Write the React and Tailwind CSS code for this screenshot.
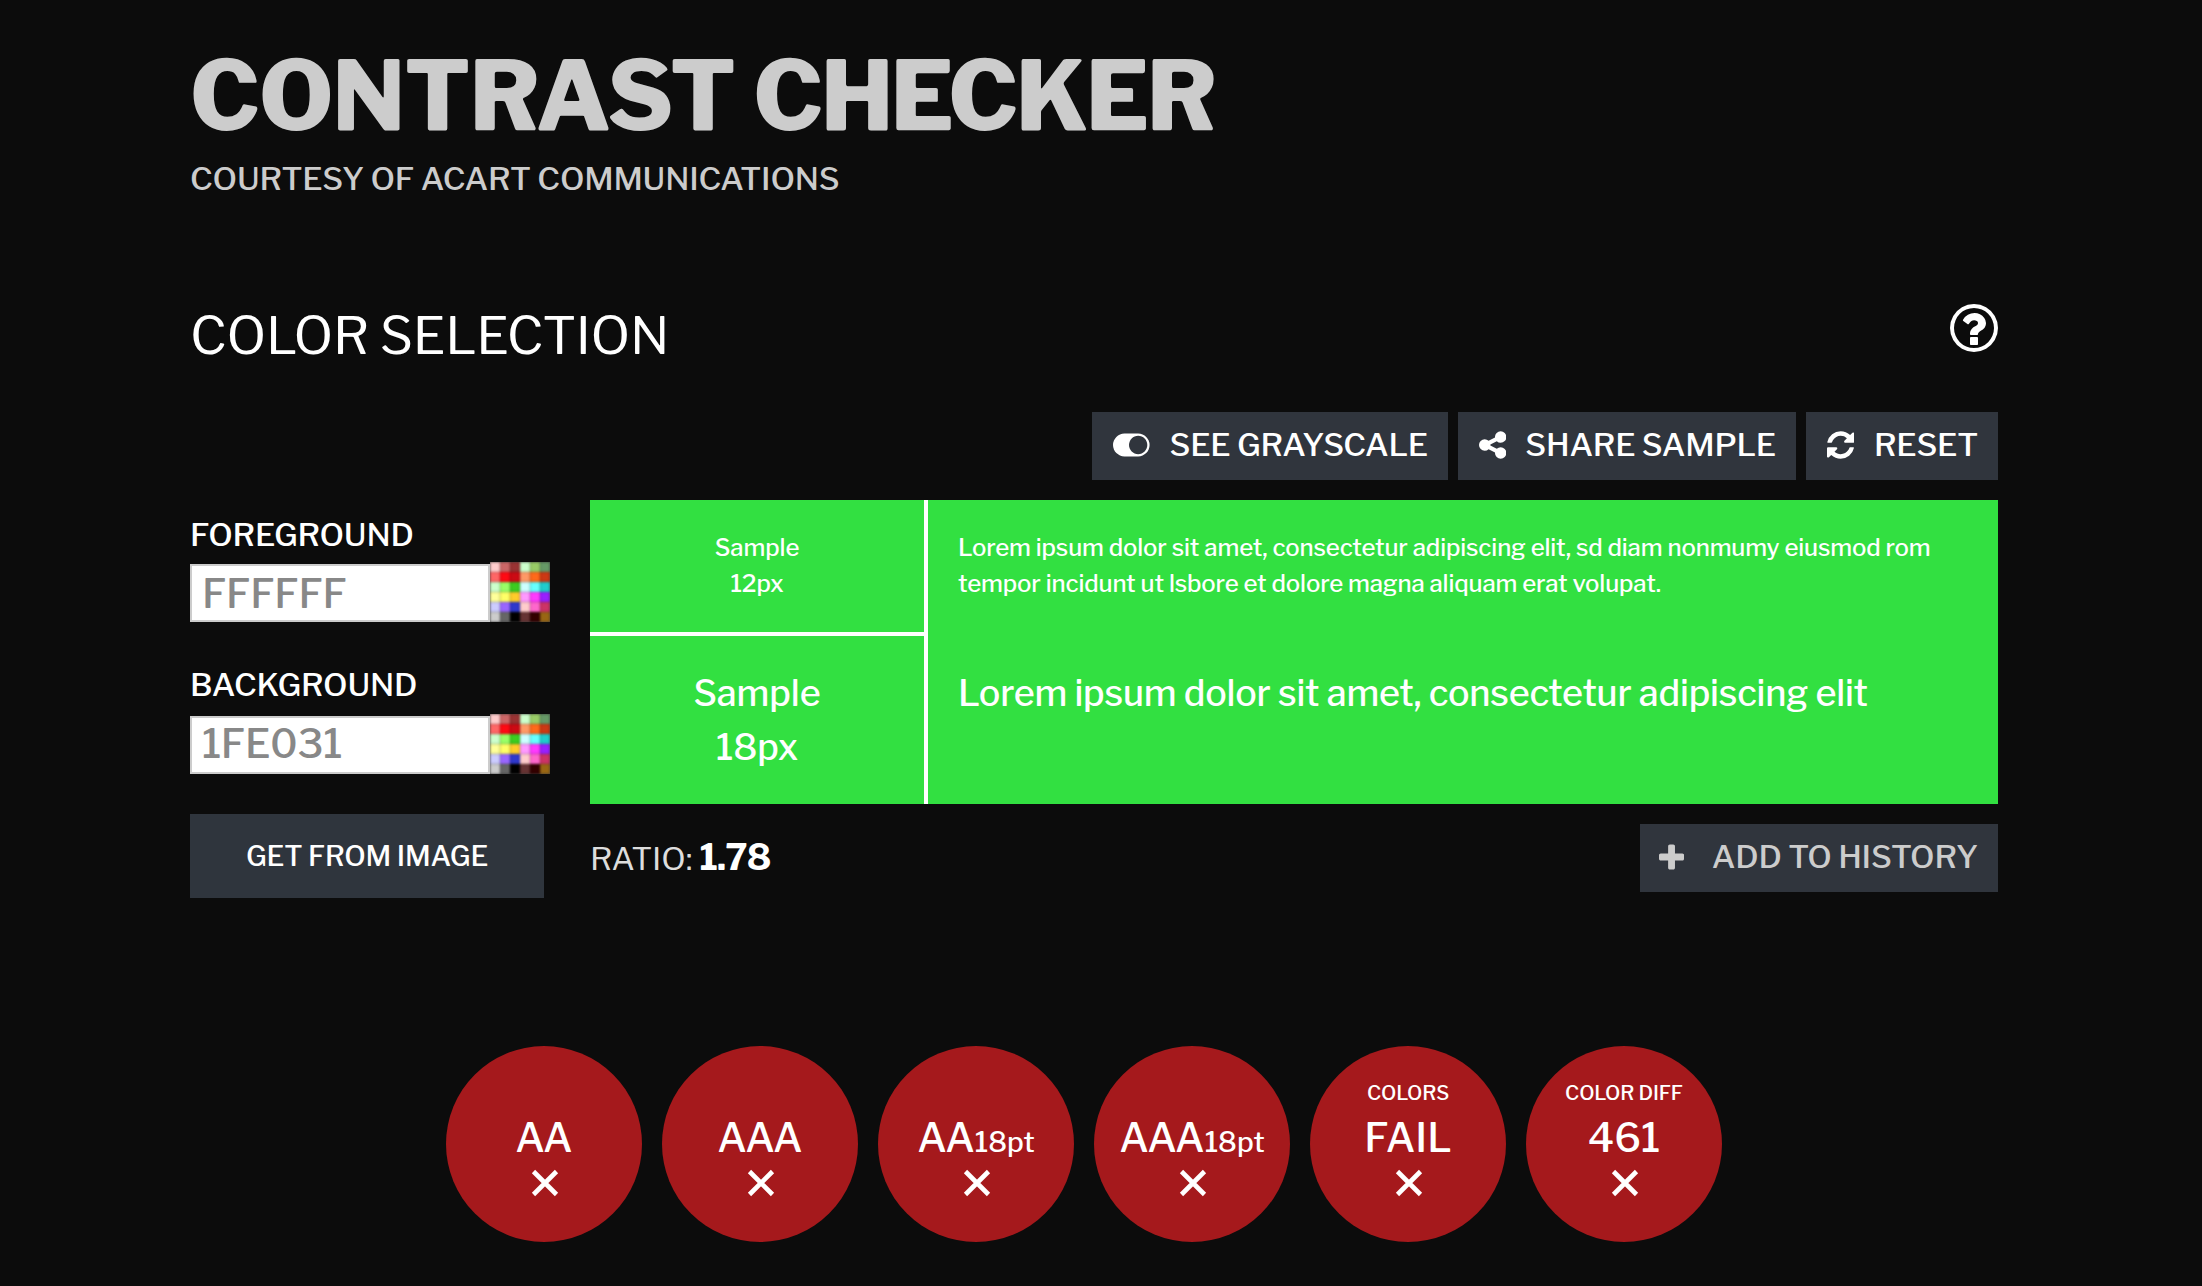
import React from 'react';

const GLYPHS = {
  help: {
    width: 1536,
    d: 'M896 1376v-192q0-14-9-23t-23-9h-192q-14 0-23 9t-9 23v192q0 14 9 23t23 9h192q14 0 23-9t9-23zm256-672q0-88-55.5-163t-138.5-116-170-41q-243 0-371 213-15 24 8 42l132 100q7 6 19 6 16 0 25-12 53-68 86-92 34-24 86-24 48 0 85.5 26t37.5 59q0 38-20 61t-68 45q-63 28-115.5 86.5t-52.5 125.5v36q0 14 9 23t23 9h192q14 0 23-9t9-23q0-19 21.5-49.5t54.5-49.5q32-18 49-28.5t46-35 44.5-48 28-60.5 12.5-81zM768 224q-130 0-248.5 51t-204 136.5-136.5 204-51 248.5 51 248.5 136.5 204 204 136.5 248.5 51 248.5-51 204-136.5 136.5-204 51-248.5-51-248.5-136.5-204-204-136.5-248.5-51zm768 640q0 209-103 385.5t-279.5 279.5-385.5 103-385.5-103-279.5-279.5-103-385.5 103-385.5 279.5-279.5 385.5-103 385.5 103 279.5 279.5 103 385.5z',
  },
  toggle: {
    width: 2048,
    d: 'M0 896q0-130 51-248.5t136.5-204 204-136.5 248.5-51h768q130 0 248.5 51t204 136.5 136.5 204 51 248.5-51 248.5-136.5 204-204 136.5-248.5 51h-768q-130 0-248.5-51t-204-136.5-136.5-204-51-248.5zm1408 512q104 0 198.5-40.5t163.5-109.5 109.5-163.5 40.5-198.5-40.5-198.5-109.5-163.5-163.5-109.5-198.5-40.5-198.5 40.5-163.5 109.5-109.5 163.5-40.5 198.5 40.5 198.5 109.5 163.5 163.5 109.5 198.5 40.5z',
  },
  share: {
    width: 1536,
    d: 'M1216 1024q133 0 226.5 93.5t93.5 226.5-93.5 226.5-226.5 93.5-226.5-93.5-93.5-226.5q0-12 2-34l-360-180q-92 86-218 86-133 0-226.5-93.5t-93.5-226.5 93.5-226.5 226.5-93.5q126 0 218 86l360-180q-2-22-2-34 0-133 93.5-226.5t226.5-93.5 226.5 93.5 93.5 226.5-93.5 226.5-226.5 93.5q-126 0-218-86l-360 180q2 22 2 34t-2 34l360 180q92-86 218-86z',
  },
  refresh: {
    width: 1536,
    d: 'M1511 1056q0 5-1 7-64 268-268 434.5t-478 166.5q-146 0-282.5-55t-243.5-157l-129 129q-19 19-45 19t-45-19-19-45v-448q0-26 19-45t45-19h448q26 0 45 19t19 45-19 45l-137 137q71 66 161 102t187 36q134 0 250-65t186-179q11-17 53-117 8-23 30-23h192q13 0 22.5 9.5t9.5 22.5zm25-800v448q0 26-19 45t-45 19h-448q-26 0-45-19t-19-45 19-45l138-138q-148-137-349-137-134 0-250 65t-186 179q-11 17-53 117-8 23-30 23h-199q-13 0-22.5-9.5t-9.5-22.5v-7q65-268 270-434.5t480-166.5q146 0 284 55.5t245 156.5l130-129q19-19 45-19t45 19 19 45z',
  },
  plus: {
    width: 1408,
    d: 'M1408 800v192q0 40-28 68t-68 28h-416v416q0 40-28 68t-68 28h-192q-40 0-68-28t-28-68v-416h-416q-40 0-68-28t-28-68v-192q0-40 28-68t68-28h416v-416q0-40 28-68t68-28h192q40 0 68 28t28 68v416h416q40 0 68 28t28 68z',
  },
};

function Glyph({ name, className }) {
  const g = GLYPHS[name];
  return (
    <svg viewBox={`0 0 ${g.width} 1792`} className={className} fill="currentColor" aria-hidden="true">
      <path d={g.d} />
    </svg>
  );
}

const SWATCHES = [
  'bg-[#ffcccc]', 'bg-[#cc6666]', 'bg-[#993333]', 'bg-[#ccffcc]', 'bg-[#99cc66]', 'bg-[#669966]',
  'bg-[#ff6666]', 'bg-[#ff0a14]', 'bg-[#cc0a14]', 'bg-[#ff9966]', 'bg-[#ff6a1a]', 'bg-[#cc3814]',
  'bg-[#ccffcc]', 'bg-[#99ff66]', 'bg-[#3ccc20]', 'bg-[#ccffff]', 'bg-[#66ffff]', 'bg-[#20cccc]',
  'bg-[#ffff99]', 'bg-[#ffff66]', 'bg-[#ffcc2a]', 'bg-[#ff99ff]', 'bg-[#ff3aff]', 'bg-[#9920ff]',
  'bg-[#ccccff]', 'bg-[#9966ff]', 'bg-[#3038cc]', 'bg-[#ffcccc]', 'bg-[#ff66cc]', 'bg-[#cc3366]',
  'bg-[#cccccc]', 'bg-[#666666]', 'bg-[#000000]', 'bg-[#663333]', 'bg-[#330000]', 'bg-[#996614]',
];

function Palette() {
  return (
    <div className="h-[60px] w-[60px] overflow-hidden bg-[#444]">
      <div className="grid h-full w-full grid-cols-6 grid-rows-6 blur-[0.8px]">
        {SWATCHES.map((c, i) => (
          <span key={i} className={`${c} shadow-[inset_0_0_2px_rgba(0,0,0,0.4)]`} />
        ))}
      </div>
    </div>
  );
}

function ColorField({ label, value, className, valueClass }) {
  return (
    <div className={className}>
      <div className="h-10 text-[32px] leading-[41px] tracking-[-0.006em]">{label}</div>
      <div className="flex items-end">
        <div className={`h-[58px] w-[300px] border-2 border-[#ccc] bg-white pl-[10px] text-[40px] tracking-[-0.008em] text-[#888] ${valueClass}`}>
          {value}
        </div>
        <Palette />
      </div>
    </div>
  );
}

function ToolButton({ icon, iconClass, label, className }) {
  return (
    <button className={`flex h-[68px] items-center justify-between bg-[#30353d] pr-5 pb-[3px] text-[32px] tracking-[-0.007em] whitespace-nowrap ${className}`}>
      <Glyph name={icon} className={iconClass} />
      <span>{label}</span>
    </button>
  );
}

const RESULTS = [
  { main: 'AA' },
  { main: 'AAA' },
  { main: 'AA', sub: '18pt' },
  { main: 'AAA', sub: '18pt' },
  { top: 'COLORS', main: 'FAIL' },
  { top: 'COLOR DIFF', main: '461' },
];

function Result({ top, main, sub }) {
  return (
    <div className="flex h-[196px] w-[196px] flex-col items-center rounded-full bg-[#a5191c] pt-[35px] whitespace-nowrap">
      <div className="h-6 text-[20px] leading-6 tracking-[-0.006em]">{top}</div>
      <div className="mt-[9px] h-12 text-[40px] leading-12">
        {main}
        {sub && <span className="text-[28px]">{sub}</span>}
      </div>
      <svg viewBox="0 0 28 28" className="mt-[7px] ml-[2px] h-7 w-7 blur-[0.6px]" fill="none" stroke="#fff" strokeWidth="4.6" aria-hidden="true">
        <path d="M2.5 2.5 25.5 25.5M25.5 2.5 2.5 25.5" />
      </svg>
    </div>
  );
}

export default function App() {
  return (
    <div className="h-[1286px] w-[2202px] overflow-hidden bg-[#0c0c0c] font-['Libre_Franklin','Inter',sans-serif] font-medium text-white">
      <main className="ml-[190px] w-[1808px] pt-[35px]">
        <header className="text-[#ccc]">
          <h1 className="h-[120px] text-[96px] leading-[121px] font-extrabold tracking-[-1.2px]">
            CONTRAST <span className="tracking-[-2.8px]">CHECKER</span>
          </h1>
          <p className="mt-[3px] h-10 text-[32px] leading-[41px] tracking-[-0.007em]">COURTESY OF ACART COMMUNICATIONS</p>
        </header>

        <div className="mt-[105px] flex h-16 items-start justify-between">
          <h2 className="text-[52px] leading-[65px] font-normal tracking-[-0.005em]">COLOR SELECTION</h2>
          <Glyph name="help" className="-mt-[2px] h-14 w-12" />
        </div>

        <div className="mt-[45px] flex justify-end gap-[10px]">
          <ToolButton icon="toggle" iconClass="h-8 w-[36.6px]" label="SEE GRAYSCALE" className="w-[356px] pl-[21px]" />
          <ToolButton icon="share" iconClass="h-8 w-[27.4px]" label="SHARE SAMPLE" className="w-[338px] pl-[21px]" />
          <ToolButton icon="refresh" iconClass="h-8 w-[27.4px]" label="RESET" className="w-[192px] pl-[21px]" />
        </div>

        <div className="mt-5 flex gap-[40px]">
          <div className="w-[360px]">
            <ColorField label="FOREGROUND" value="FFFFFF" className="pt-[14px] [&>div:last-child]:mt-[8px]" valueClass="leading-[55px]" />
            <ColorField label="BACKGROUND" value="1FE031" className="mt-[42px] [&>div:last-child]:mt-[10px]" valueClass="leading-[51px]" />
            <button className="mt-10 block h-[84px] w-[354px] bg-[#2f353d] text-[28px] tracking-[-0.007em]">GET FROM IMAGE</button>
          </div>

          <div className="w-[1408px]">
            <div className="flex h-[304px] bg-[#32e041] tracking-[-0.005em]">
              <div className="w-[338px] border-r-4 border-white text-center">
                <div className="h-[136px] border-b-4 border-white pt-[30px] text-[24px] leading-[36px]">
                  Sample<br />12px
                </div>
                <div className="pt-[30px] text-[36px] leading-[54px]">
                  Sample<br />18px
                </div>
              </div>
              <div className="pl-[30px] whitespace-nowrap">
                <p className="h-[136px] pt-[30px] text-[24px] leading-[36px] tracking-[-0.12px]">
                  Lorem ipsum dolor sit amet, consectetur adipiscing elit, sd diam nonmumy eiusmod rom
                  <br />
                  tempor incidunt ut lsbore et dolore magna aliquam erat volupat.
                </p>
                <p className="pt-[30px] text-[36px] leading-[54px] tracking-[-0.21px]">
                  Lorem ipsum dolor sit amet, consectetur adipiscing elit
                </p>
              </div>
            </div>
            <div className="mt-5 flex items-start justify-between">
              <p className="flex items-baseline gap-[7px] text-[32px] leading-[66px]">
                <span className="font-normal text-[#ddd]">RATIO:</span>
                <b className="text-[36px] font-bold tracking-[-0.8px]">1.78</b>
              </p>
              <ToolButton icon="plus" iconClass="h-8 w-[25.1px]" label="ADD TO HISTORY" className="w-[358px] pl-[19px] text-[#ccc]" />
            </div>
          </div>
        </div>

        <section className="mt-[148px] ml-[256px] flex gap-5">
          {RESULTS.map((r, i) => (
            <Result key={i} {...r} />
          ))}
        </section>
      </main>
    </div>
  );
}
